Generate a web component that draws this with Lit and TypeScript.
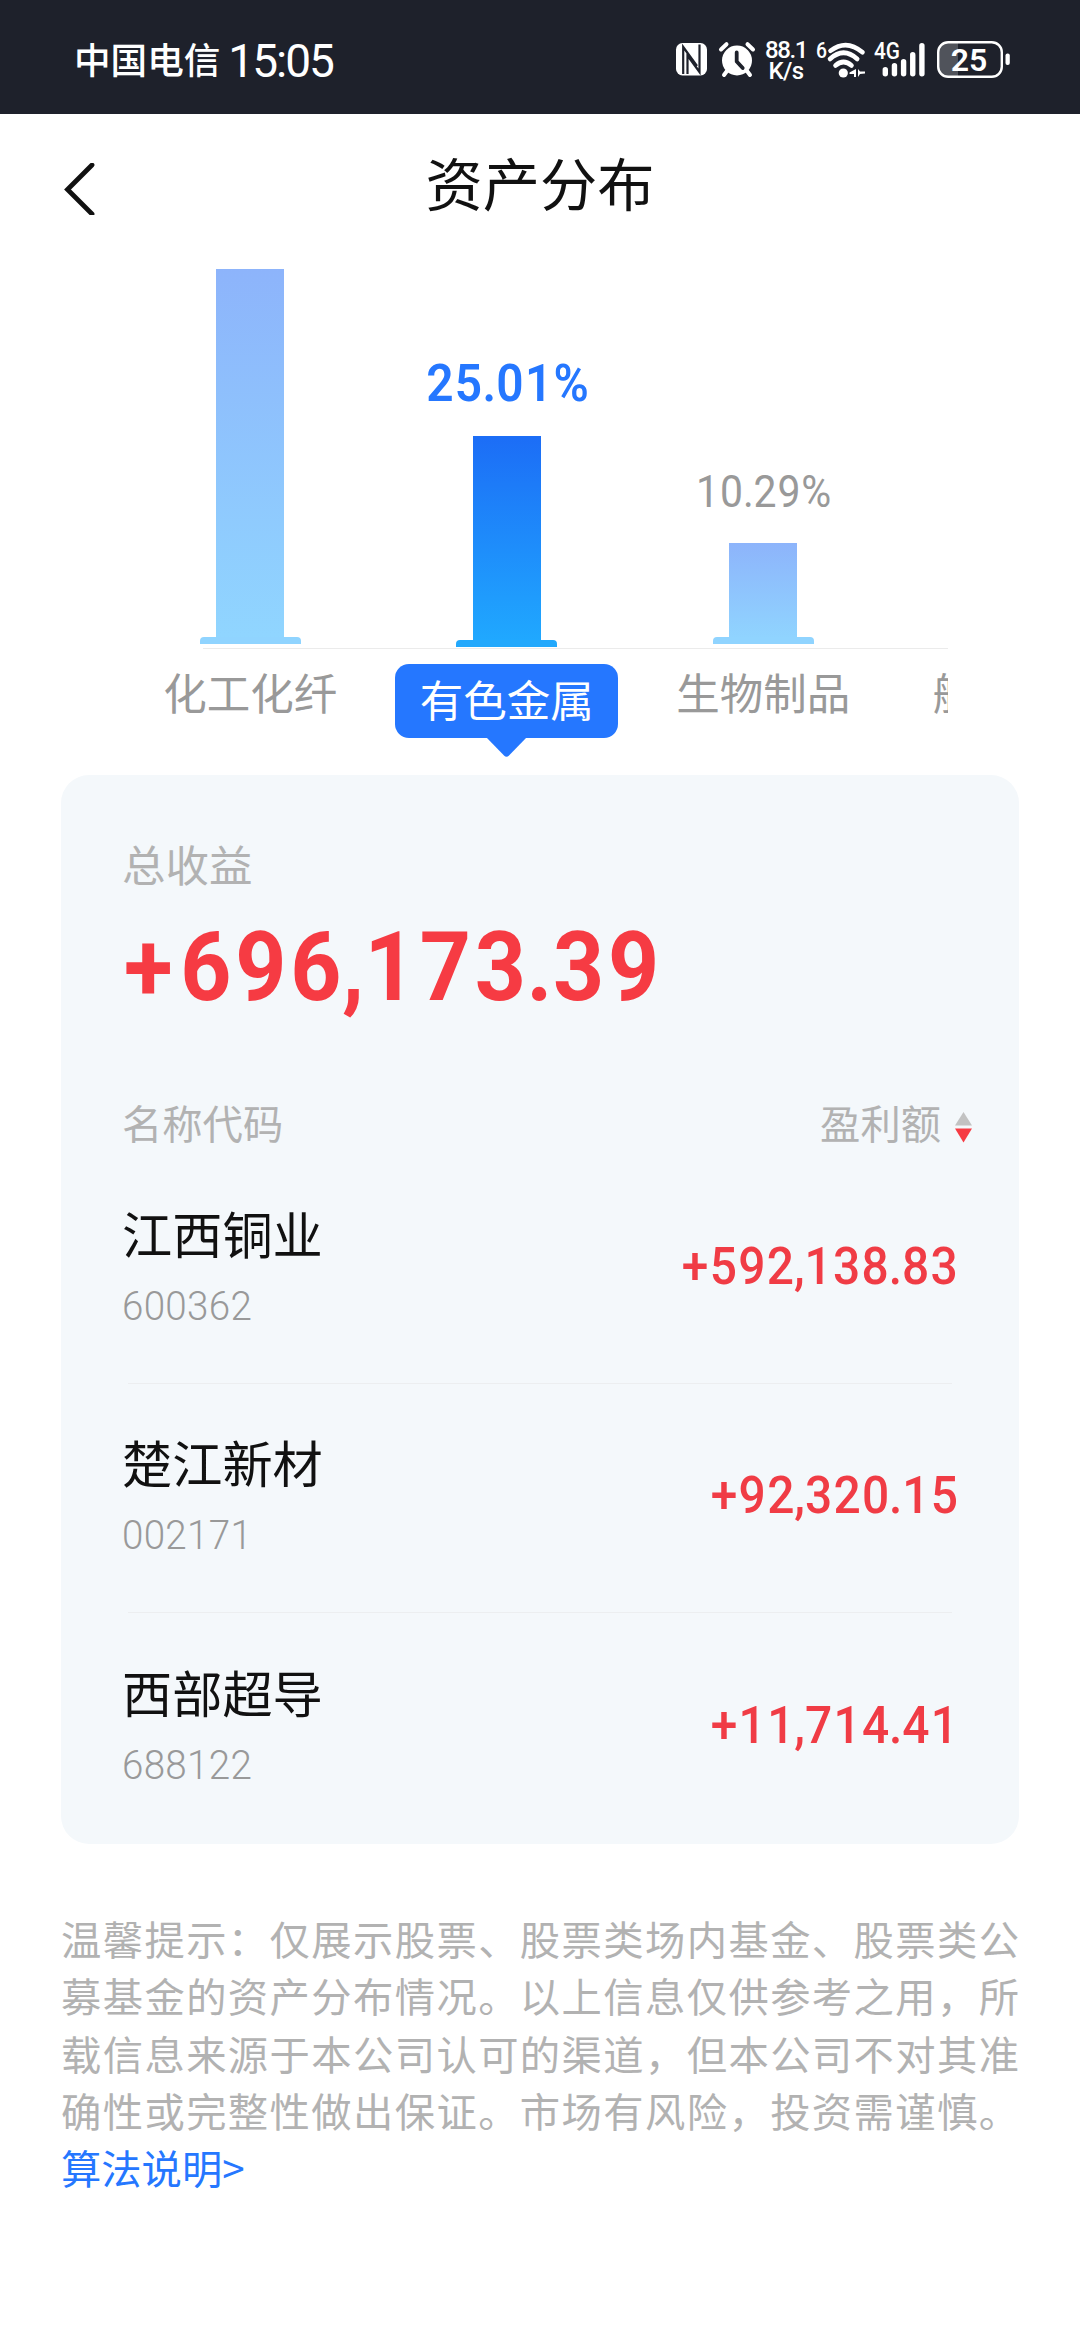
import { LitElement, html, css, svg } from "lit";
import { customElement } from "lit/decorators.js";
import { classMap } from "lit/directives/class-map.js";

interface Sector {
  name: string;
  share?: string;
  height: number;
  active?: boolean;
}

interface Holding {
  name: string;
  code: string;
  profit: string;
}

const SECTORS: Sector[] = [
  { name: "化工化纤", height: 375 },
  { name: "有色金属", share: "25.01%", height: 211, active: true },
  { name: "生物制品", share: "10.29%", height: 101 },
  { name: "航天装备", height: 0 },
];

const HOLDINGS: Holding[] = [
  { name: "江西铜业", code: "600362", profit: "+592,138.83" },
  { name: "楚江新材", code: "002171", profit: "+92,320.15" },
  { name: "西部超导", code: "688122", profit: "+11,714.41" },
];

const SIGNAL_TOPS = [24, 20, 16, 9, 0];

/** Splits a figure so that its comma and point can be set tighter than the digits. */
const figure = (value: string) =>
  value.split(/([.,])/).map((part) => (part === "." || part === "," ? html`<span class="sep">${part}</span>` : part));

@customElement("status-bar")
class StatusBar extends LitElement {
  static styles = css`
    :host {
      display: flex;
      height: 114px;
      box-sizing: border-box;
      padding: 5px 70px 0 74px;
      align-items: center;
      background: #1e212b;
      color: #fff;
      font-family: Roboto, "Noto Sans CJK SC", sans-serif;
    }
    svg {
      display: block;
      flex: none;
      overflow: visible;
    }
    .carrier {
      font: 500 36.6px/60px "Noto Sans CJK SC", sans-serif;
      white-space: nowrap;
      margin-top: -2px;
    }
    .clock {
      font-size: 46px;
      font-weight: 450;
      line-height: 60px;
      letter-spacing: -2px;
      margin-left: 8px;
      margin-top: 3px;
    }
    .icons {
      display: flex;
      margin-left: auto;
      align-items: center;
    }
    .alarm {
      margin-left: 12px;
    }
    .wifi {
      margin-left: 11px;
    }
    .signal {
      margin-left: 10px;
    }
    .battery {
      margin-left: 12px;
    }
    .speed {
      display: flex;
      flex-direction: column;
      align-items: center;
      width: 40px;
      margin-left: 11px;
      margin-top: 3px;
      font-size: 24px;
      line-height: 21.5px;
      font-weight: 500;
      letter-spacing: -1.4px;
    }
    .unit {
      letter-spacing: -0.6px;
    }
  `;

  render() {
    return html`
      <span class="carrier">中国电信</span>
      <span class="clock">15:05</span>
      <div class="icons">
        <svg width="31" height="33" viewBox="0 0 31 33">
          <rect x="0" y="0" width="31" height="32.5" rx="6.5" fill="#fff" />
          <path d="M7.200 31V4L21 23M23.500 1.500V29L11.500 12.500V31" fill="none" stroke="#1e212b" stroke-width="2.200" />
        </svg>
        <svg class="alarm" width="36" height="35" viewBox="0 0 36 35">
          <circle cx="18" cy="18.500" r="15" fill="#fff" />
          <path
            d="M2 7.500L7.500 2.200M34 7.500L28.500 2.200M8 29L5 33M28 29L31 33"
            stroke="#fff"
            stroke-width="4"
            stroke-linecap="round"
          />
          <path
            d="M17.700 10.500v9l6 6.500"
            fill="none"
            stroke="#1e212b"
            stroke-width="3.800"
            stroke-linecap="round"
            stroke-linejoin="round"
          />
        </svg>
        <div class="speed"><span>88.1</span><span class="unit">K/s</span></div>
        <svg class="wifi" width="48" height="36" viewBox="0 0 48 36">
          <text x="-1" y="16" font-size="22" font-weight="500" fill="#fff" textLength="11" lengthAdjust="spacingAndGlyphs">6</text>
          <g fill="none" stroke="#fff" stroke-width="4.600" stroke-linecap="round">
            <path d="M13.500 8.800Q29.500 -3.500 45.500 10.300" />
            <path d="M13 17Q26.500 4.500 40.200 17" />
            <path d="M18.500 23.500Q26.500 16.500 34.500 23.500" />
          </g>
          <circle cx="26.300" cy="31" r="4.600" fill="#fff" />
          <path d="M39 27v8h-2v-3h-4.500v-1.500zM41 27v8l2-3 5-.500v-2h-5z" fill="#fff" />
        </svg>
        <svg class="signal" width="50" height="36" viewBox="0 0 50 36">
          <text x="-1" y="17" font-size="23" font-weight="500" fill="#fff" textLength="26" lengthAdjust="spacingAndGlyphs">4G</text>
          ${SIGNAL_TOPS.map(
            (top, i) => svg`<rect x=${7.6 + i * 9.15} y=${top + 1} width="5.400" height=${33.5 - top} rx="2.700" fill="#fff" />`,
          )}
        </svg>
        <svg class="battery" width="73" height="37" viewBox="0 0 73 37">
          <path d="M11 2H21V35H11Q2 35 2 26V11Q2 2 11 2z" fill="#50535b" />
          <rect x="1.200" y="1.200" width="63.600" height="34.600" rx="10" fill="none" stroke="#fff" stroke-width="2.400" />
          <rect x="68.500" y="12.500" width="4.300" height="11.500" rx="2" fill="#fff" />
          <text x="32" y="30" text-anchor="middle" font-size="32" font-weight="600" fill="#fff">25</text>
        </svg>
      </div>
    `;
  }
}

@customElement("sector-chart")
class SectorChart extends LitElement {
  static styles = css`
    :host {
      display: block;
      width: 826px;
      margin-left: 122px;
      overflow: hidden;
      height: 506px;
    }
    .plot,
    .labels {
      display: flex;
      width: max-content;
    }
    .plot {
      height: 379px;
    }
    .col {
      width: 256.5px;
      box-sizing: border-box;
      padding-bottom: 4px;
      display: flex;
      flex-direction: column;
      align-items: center;
      justify-content: flex-end;
    }
    .col.active {
      padding-bottom: 1px;
    }
    .share {
      font: 450 44px/60px Roboto, sans-serif;
      letter-spacing: 1px;
      color: #999;
      margin: 0 0 21px 2px;
      transform: scaleX(0.93);
    }
    .active .share {
      font-size: 51.5px;
      font-weight: 600;
      letter-spacing: 1.4px;
      color: #2577ff;
      margin-bottom: 22px;
    }
    .sep {
      margin: 0 -1.2px;
    }
    .bar {
      width: 68px;
      display: flex;
      flex-direction: column;
      align-items: center;
      justify-content: flex-end;
      background: linear-gradient(#8db4fb, #90d6ff);
    }
    .foot {
      flex: none;
      width: 101px;
      height: 7px;
      border-radius: 4px 4px 0 0;
      background: #90d4ff;
    }
    .active .bar {
      background: linear-gradient(#1c6df6, #20aaff);
    }
    .active .foot {
      background: #22a8fc;
    }
    .axis {
      height: 1px;
      margin-left: 81px;
      background: #ebebeb;
    }
    .label {
      width: 256.5px;
      display: flex;
      justify-content: center;
      align-items: flex-start;
      font: 400 43.5px/60px "Noto Sans CJK SC", sans-serif;
      color: #999;
      white-space: nowrap;
      padding-top: 12.5px;
    }
    .label.active {
      padding-top: 15px;
      color: #fff;
    }
    .active .pill {
      position: relative;
      width: 223px;
      height: 74px;
      line-height: 70px;
      text-align: center;
      border-radius: 14px;
      background: #2577ff;
    }
    .tip {
      position: absolute;
      left: 91px;
      top: 73px;
      display: block;
    }
  `;

  render() {
    return html`
      <div class="plot">
        ${SECTORS.map(
          (s) => html`
            <div class=${classMap({ col: true, active: !!s.active })}>
              ${s.share ? html`<span class="share">${figure(s.share)}</span>` : null}
              ${s.height
                ? html`<div class="bar" style="height:${s.height}px"><div class="foot"></div></div>`
                : null}
            </div>
          `,
        )}
      </div>
      <div class="axis"></div>
      <div class="labels">
        ${SECTORS.map(
          (s) => html`
            <div class=${classMap({ label: true, active: !!s.active })}>
              <span class="pill"
                >${s.name}${s.active
                  ? html`<svg class="tip" width="41" height="21" viewBox="0 0 41 21">
                      <path d="M0 0H41L23 18.500Q20.500 21 18 18.500z" fill="#2577ff" />
                    </svg>`
                  : null}</span
              >
            </div>
          `,
        )}
      </div>
    `;
  }
}

@customElement("profit-card")
class ProfitCard extends LitElement {
  static styles = css`
    :host {
      display: block;
      box-sizing: border-box;
      width: 958px;
      height: 1069px;
      margin: 0 61px;
      padding: 59px 61px 0;
      border-radius: 28px;
      background: #f4f8fb;
      font-family: "Noto Sans CJK SC", sans-serif;
    }
    .caption {
      font-size: 43.5px;
      line-height: 60px;
      color: #b2b2b2;
    }
    .total {
      width: max-content;
      margin: 18px 0 0 2px;
      font: 700 96px/110px Roboto, sans-serif;
      letter-spacing: 4.1px;
      color: #f63b43;
      transform: scaleX(0.93);
      transform-origin: left;
    }
    .sep {
      margin: 0 -1.5px;
    }
    .total .sep {
      margin: 0 -3.5px;
    }
    .total .sign {
      margin-right: 4px;
    }
    .head {
      display: flex;
      align-items: center;
      justify-content: space-between;
      margin: 70px -14px 0 0;
      font-size: 40.3px;
      line-height: 60px;
      color: #b2b2b2;
    }
    .sort {
      display: flex;
      align-items: center;
      gap: 14px;
    }
    .arrows {
      display: block;
      margin-top: 10px;
    }
    .row {
      display: flex;
      align-items: center;
      justify-content: space-between;
      box-sizing: border-box;
      height: 228.3px;
      padding-bottom: 52px;
      padding-top: 43px;
    }
    .row:first-of-type {
      margin-top: 3px;
    }
    .rows {
      padding-top: 2.5px;
    }
    .rule {
      height: 1px;
      margin: 0 6px 0 6px;
      background: #eceef0;
    }
    .name {
      font-size: 50.2px;
      line-height: 70px;
      color: #111;
    }
    .code {
      margin: 14px 0 0 0;
      width: max-content;
      font: 350 41.5px/50px Roboto, sans-serif;
      letter-spacing: 0.3px;
      color: #999;
      transform: scaleX(0.93);
      transform-origin: left;
    }
    .profit {
      font: 500 51.5px/60px Roboto, sans-serif;
      letter-spacing: 1.4px;
      color: #f03c45;
      margin: 6px -1px 0 0;
      transform: scaleX(0.93);
      transform-origin: right;
    }
    .row:first-of-type {
      margin-top: 0;
    }
  `;

  render() {
    return html`
      <div class="caption">总收益</div>
      <div class="total"><span class="sign">+</span>${figure("696,173.39")}</div>
      <div class="head">
        <span>名称代码</span>
        <span class="sort">
          盈利额
          <svg class="arrows" width="17" height="31" viewBox="0 0 17 31">
            <path d="M8.500 0L17 13.500H0z" fill="#c2c2c2" />
            <path d="M0 16.500H17L8.500 30.500z" fill="#f63b43" />
          </svg>
        </span>
      </div>
      <div class="rows">
        ${HOLDINGS.map(
          (h, i) => html`
            ${i ? html`<div class="rule"></div>` : null}
            <div class="row">
              <div>
                <div class="name">${h.name}</div>
                <div class="code">${h.code}</div>
              </div>
              <div class="profit">${figure(h.profit)}</div>
            </div>
          `,
        )}
      </div>
    `;
  }
}

@customElement("app-root")
class AppRoot extends LitElement {
  static styles = css`
    :host {
      display: block;
      width: 1080px;
      height: 2340px;
      overflow: hidden;
      background: #fff;
      font-family: "Noto Sans CJK SC", sans-serif;
    }
    .nav {
      display: grid;
      grid-template-columns: 140px 1fr 140px;
      align-items: center;
      height: 150px;
      margin-bottom: 5px;
    }
    .back {
      display: block;
      margin-left: 63px;
    }
    .title {
      text-align: center;
      font-size: 57.2px;
      line-height: 80px;
      margin-top: -16px;
      color: #111;
    }
    .notice {
      margin: 65px 61px 0;
      font-size: 40.3px;
      line-height: 57.25px;
      color: #b2b2b2;
      text-align: justify;
    }
    .link {
      color: #2577ff;
    }
  `;

  render() {
    return html`
      <status-bar></status-bar>
      <div class="nav">
        <svg class="back" width="34" height="52" viewBox="0 0 34 52">
          <path
            d="M29 2L4.500 26.500L29 51"
            fill="none"
            stroke="#111"
            stroke-width="4.800"
            stroke-linecap="round"
          />
        </svg>
        <div class="title">资产分布</div>
      </div>
      <sector-chart></sector-chart>
      <profit-card></profit-card>
      <div class="notice">温馨提示：仅展示股票、股票类场内基金、股票类公募基金的资产分布情况。以上信息仅供参考之用，所载信息来源于本公司认可的渠道，但本公司不对其准确性或完整性做出保证。市场有风险，投资需谨慎。<span class="link">算法说明&gt;</span></div>
    `;
  }
}
